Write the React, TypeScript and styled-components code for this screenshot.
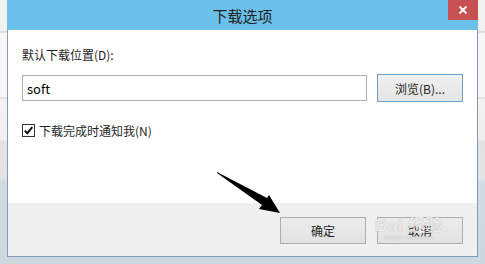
import React from "react";
import styled, { createGlobalStyle } from "styled-components";

const GlobalStyle = createGlobalStyle`
  html, body {
    margin: 0;
    padding: 0;
    overflow: hidden;
  }
  body {
    font-family: "Noto Sans CJK SC", "Noto Sans", sans-serif;
  }
`;

const Page = styled.div`
  position: relative;
  width: 485px;
  height: 264px;
  overflow: hidden;
  display: flex;
  align-items: flex-start;
  padding-left: 7px;
  box-sizing: border-box;
  background: linear-gradient(
    to bottom,
    #f2f2f2 0px,
    #f2f2f2 31px,
    #c9c9c9 32px,
    #f7f7f7 33px,
    #f7f7f7 97px,
    #d2d2d2 98px,
    #f3f3f3 99px,
    #eeeeee 140px,
    #e2e2e2 141px,
    #e4e4e4 178px,
    #d2dce3 182px,
    #ccd7df 264px
  );
`;

const Dialog = styled.div`
  width: 471px;
  height: 257px;
  box-sizing: border-box;
  border: 1px solid #7f9db9;
  border-top: none;
  display: flex;
  flex-direction: column;
  background: #ffffff;
`;

const TitleBar = styled.div`
  position: relative;
  height: 30px;
  margin: 0 -1px;
  background: #6ac1ec;
  display: flex;
  align-items: center;
  justify-content: center;
  font-size: 15px;
  color: #222;
  flex-shrink: 0;
`;

const CloseButton = styled.div`
  position: absolute;
  right: 0;
  top: 0;
  width: 30px;
  height: 20px;
  background: #c75050;
  display: flex;
  align-items: center;
  justify-content: center;
`;

const Body = styled.div`
  flex: 1;
  padding: 17px 14px 0 14px;
  display: flex;
  flex-direction: column;
`;

const Label = styled.div`
  font-size: 12px;
  line-height: 16px;
  color: #1e1e1e;
`;

const PathRow = styled.div`
  display: flex;
  align-items: center;
  gap: 10px;
  margin-top: 11px;
`;

const PathInput = styled.div`
  flex: 1;
  height: 26px;
  box-sizing: border-box;
  border: 1px solid #abadb3;
  display: flex;
  align-items: center;
  padding-left: 4px;
  font-size: 13px;
  color: #000;
`;

const Button = styled.div<{ focused?: boolean }>`
  width: 86px;
  height: ${(p) => (p.focused ? 28 : 27)}px;
  box-sizing: border-box;
  border: 1px solid ${(p) => (p.focused ? "#6aa0cf" : "#adadad")};
  background: ${(p) =>
    p.focused
      ? "linear-gradient(#f0f0f0, #e4e4e4)"
      : "linear-gradient(#ececec, #e2e2e2)"};
  display: flex;
  align-items: center;
  justify-content: center;
  font-size: 12px;
  color: #1e1e1e;
`;

const CheckRow = styled.div`
  display: flex;
  align-items: center;
  gap: 4px;
  margin-top: 20px;
  font-size: 12px;
  color: #1e1e1e;
`;

const CheckBox = styled.div`
  width: 13px;
  height: 13px;
  box-sizing: border-box;
  border: 1px solid #333;
  background: #fff;
  display: flex;
  align-items: center;
  justify-content: center;
`;

const Footer = styled.div`
  position: relative;
  height: 53px;
  background: #f0f0f0;
  display: flex;
  justify-content: flex-end;
  align-items: flex-start;
  gap: 11px;
  padding: 14px 14px 0 0;
  box-sizing: border-box;
`;

const Watermark = styled.div`
  position: absolute;
  left: 367px;
  top: 8px;
  display: flex;
  flex-direction: column;
  align-items: center;
  pointer-events: none;
  color: rgba(255, 255, 255, 0.75);
  text-shadow: 0 0 1px rgba(120, 120, 120, 0.6);
`;

const WatermarkText = styled.div`
  font-family: "Liberation Sans", "Noto Sans CJK SC", sans-serif;
  font-size: 17px;
  font-weight: bold;
  letter-spacing: 0.5px;
`;

const WatermarkUrl = styled.div`
  font-family: "Liberation Sans", sans-serif;
  font-size: 6px;
  margin-top: -2px;
`;

const Arrow = styled.svg`
  position: absolute;
  left: 212px;
  top: 168px;
`;

export default function App() {
  return (
    <>
      <GlobalStyle />
      <Page>
        <Dialog>
          <TitleBar>
            下载选项
            <CloseButton>
              <svg width="10" height="10" viewBox="0 0 10 10">
                <path d="M1.5 1.5 L8.5 8.5 M8.5 1.5 L1.5 8.5" stroke="#fff" strokeWidth="1.8" />
              </svg>
            </CloseButton>
          </TitleBar>
          <Body>
            <Label>默认下载位置(D):</Label>
            <PathRow>
              <PathInput>soft</PathInput>
              <Button focused>浏览(B)...</Button>
            </PathRow>
            <CheckRow>
              <CheckBox>
                <svg width="11" height="11" viewBox="0 0 11 11">
                  <path d="M1.8 5.6 L4.3 8.2 L9.3 2.2" stroke="#111" strokeWidth="2" fill="none" />
                </svg>
              </CheckBox>
              下载完成时通知我(N)
            </CheckRow>
          </Body>
          <Footer>
            <Button>确定</Button>
            <Button>取消</Button>
            <Watermark>
              <WatermarkText>Bai 经验</WatermarkText>
              <WatermarkUrl>jingyan.baidu.com</WatermarkUrl>
            </Watermark>
          </Footer>
        </Dialog>
        <Arrow width="72" height="50" viewBox="0 0 72 50">
          <path d="M5 4 L6 4.5 L55 30 L57 27 L68 45 L47 41 L50 37 L5 5 Z" fill="#000" />
        </Arrow>
      </Page>
    </>
  );
}
